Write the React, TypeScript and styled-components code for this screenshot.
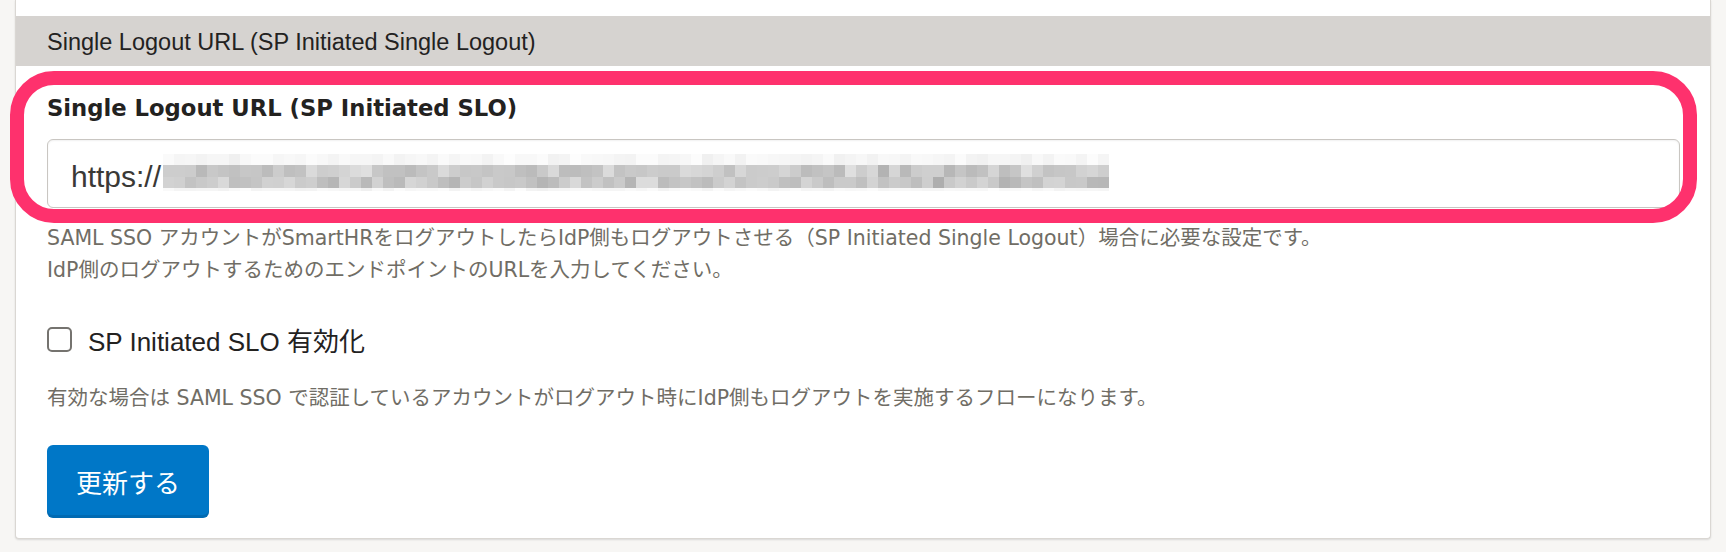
import React, { useMemo } from "react";
import styled, { createGlobalStyle } from "styled-components";

const GlobalStyle = createGlobalStyle`
  html, body {
    margin: 0;
    padding: 0;
    background: #f7f6f4;
  }
  body {
    font-family: "Liberation Sans", "Noto Sans CJK JP", sans-serif;
    color: #23221f;
  }
  * {
    box-sizing: border-box;
  }
`;

const Page = styled.div`
  width: 1726px;
  height: 552px;
  overflow: hidden;
  background: #f7f6f4;
`;

const Card = styled.section`
  margin: 0 15px;
  background: #ffffff;
  border: 1px solid #dad7d3;
  border-top: none;
  border-radius: 0 0 4px 4px;
  box-shadow: 0 1px 2px rgba(0, 0, 0, 0.12);
`;

const SectionTail = styled.div`
  height: 16px;
`;

const SectionHeader = styled.h3`
  margin: 0;
  height: 50px;
  padding: 2px 0 0 31px;
  background: #d6d3d0;
  font-size: 23.5px;
  font-weight: 400;
  line-height: 48px;
  color: #23221f;
`;

const Body = styled.div`
  padding: 26px 30px 20px 31px;
`;

const Field = styled.div`
  position: relative;
`;

const FieldLabel = styled.label`
  display: block;
  margin-bottom: 15px;
  font-family: "DejaVu Sans", "Noto Sans CJK JP", sans-serif;
  font-size: 22.7px;
  font-weight: 700;
  line-height: 32px;
  color: #23221f;
`;

const InputBox = styled.div`
  display: flex;
  align-items: center;
  height: 69px;
  padding: 6px 0 0 23px;
  border: 1px solid #c9c6c2;
  border-radius: 6px;
  background: #ffffff;
  box-shadow: inset 0 1px 2px rgba(0, 0, 0, 0.06);
`;

const UrlText = styled.span`
  flex: none;
  font-size: 30px;
  color: #3a3936;
`;

const Blur = styled.svg`
  display: block;
  flex: none;
  margin: 0 0 8px 2px;
`;

// annotation frame drawn over the field
const Highlight = styled.div`
  position: absolute;
  left: -37px;
  right: -17px;
  top: -21px;
  bottom: -15px;
  border: 14px solid #fe316d;
  border-radius: 44px;
  pointer-events: none;
`;

const Hint = styled.p<{ $gap: number }>`
  margin: ${(p) => p.$gap}px 0 0;
  font-family: "DejaVu Sans", "Noto Sans CJK JP", sans-serif;
  font-size: 20.5px;
  line-height: 32px;
  color: #706d65;
`;

const CheckRow = styled.label`
  display: flex;
  align-items: center;
  gap: 16px;
  height: 34px;
  margin-top: 36px;
  font-size: 26px;
  color: #23221f;
`;

const CheckBox = styled.input`
  appearance: none;
  flex: none;
  width: 25px;
  height: 25px;
  margin: 0;
  border: 2px solid #75736f;
  border-radius: 5px;
  background: #ffffff;
`;

const SubmitButton = styled.button`
  display: block;
  height: 73px;
  margin-top: 31px;
  padding: 0 29px;
  border: none;
  border-radius: 6px;
  background: #0077c7;
  box-shadow: inset 0 -3px 0 rgba(0, 0, 0, 0.1);
  font-family: "Liberation Sans", "Noto Sans CJK JP", sans-serif;
  font-size: 26px;
  color: #ffffff;
`;

function seeded(seed: number) {
  let a = seed;
  return () => {
    a |= 0;
    a = (a + 0x6d2b79f5) | 0;
    let t = Math.imul(a ^ (a >>> 15), 1 | a);
    t = (t + Math.imul(t ^ (t >>> 7), 61 | t)) ^ t;
    return ((t ^ (t >>> 14)) >>> 0) / 4294967296;
  };
}

const bands = [
  { y: 0, h: 11, min: 238, max: 255 },
  { y: 11, h: 12, min: 176, max: 226 },
  { y: 23, h: 11, min: 172, max: 228 },
  { y: 34, h: 3, min: 240, max: 253 },
];

const BlurredUrl = () => {
  const cols = 86;
  const cell = 11;
  const cells = useMemo(() => {
    const rand = seeded(41);
    const out: { x: number; y: number; h: number; g: number }[] = [];
    for (let c = 0; c < cols; c++) {
      for (const b of bands) {
        const r = (rand() + rand()) / 2;
        const g = Math.round(b.min + (b.max - b.min) * r);
        out.push({ x: c * cell, y: b.y, h: b.h, g });
      }
    }
    return out;
  }, []);

  return (
    <Blur width={cols * cell} height={37} viewBox={`0 0 ${cols * cell} 37`} shapeRendering="crispEdges">
      {cells.map((c, i) => (
        <rect key={i} x={c.x} y={c.y} width={cell} height={c.h} fill={`rgb(${c.g},${c.g},${c.g})`} />
      ))}
    </Blur>
  );
};

export default function App() {
  return (
    <>
      <GlobalStyle />
      <Page>
        <Card>
          <SectionTail />
          <SectionHeader>Single Logout URL (SP Initiated Single Logout)</SectionHeader>
          <Body>
            <Field>
              <FieldLabel>Single Logout URL (SP Initiated SLO)</FieldLabel>
              <InputBox>
                <UrlText>https://</UrlText>
                <BlurredUrl />
              </InputBox>
              <Highlight />
            </Field>
            <Hint $gap={14}>
              SAML SSO アカウントがSmartHRをログアウトしたらIdP側もログアウトさせる（SP Initiated Single Logout）場合に必要な設定です。
              <br />
              IdP側のログアウトするためのエンドポイントのURLを入力してください。
            </Hint>
            <CheckRow>
              <CheckBox type="checkbox" />
              SP Initiated SLO 有効化
            </CheckRow>
            <Hint $gap={26}>
              有効な場合は SAML SSO で認証しているアカウントがログアウト時にIdP側もログアウトを実施するフローになります。
            </Hint>
            <SubmitButton type="button">更新する</SubmitButton>
          </Body>
        </Card>
      </Page>
    </>
  );
}
